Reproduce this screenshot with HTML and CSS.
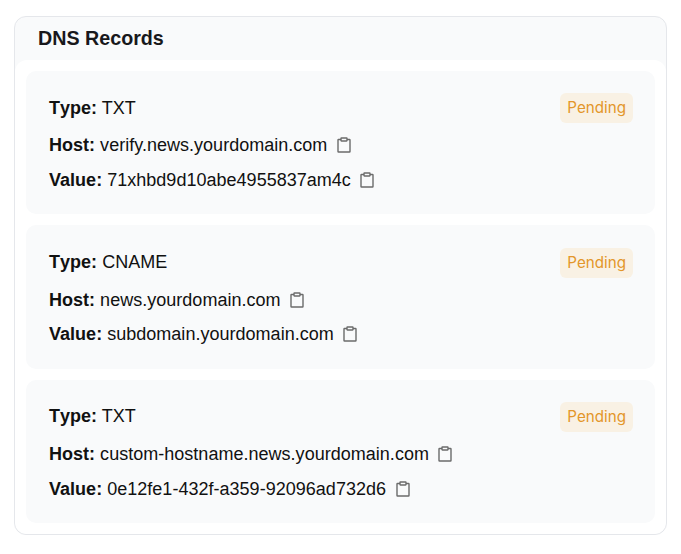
FILE: index.html
```html
<!DOCTYPE html>
<html lang="en">
<head>
  <meta charset="UTF-8" />
  <title>DNS Records</title>
  <link rel="stylesheet" href="styles.css">
</head>
<body>
  <svg class="icon-defs" width="0" height="0">
    <symbol id="clipboard" viewBox="0 0 16 16">
      <path d="M5 2.5H2.5a.5.5 0 0 0-.5.5v11.5a.5.5 0 0 0 .5.5h11a.5.5 0 0 0 .5-.5V3a.5.5 0 0 0-.5-.5H11" fill="none" stroke="currentColor" stroke-width="1.4"/>
      <rect x="5" y="1" width="6" height="3" rx=".4" fill="none" stroke="currentColor" stroke-width="1.4"/>
    </symbol>
  </svg>

  <section class="records-panel">
    <h2 class="panel-title">DNS Records</h2>
    <div class="panel-body">

      <div class="record">
        <span class="badge">Pending</span>
        <p class="row row-type"><strong>Type:</strong> TXT</p>
        <p class="row"><strong>Host:</strong> verify.news.yourdomain.com <svg class="copy"><use href="#clipboard"/></svg></p>
        <p class="row"><strong>Value:</strong> 71xhbd9d10abe4955837am4c <svg class="copy"><use href="#clipboard"/></svg></p>
      </div>

      <div class="record">
        <span class="badge">Pending</span>
        <p class="row row-type"><strong>Type:</strong> CNAME</p>
        <p class="row"><strong>Host:</strong> news.yourdomain.com <svg class="copy"><use href="#clipboard"/></svg></p>
        <p class="row"><strong>Value:</strong> subdomain.yourdomain.com <svg class="copy"><use href="#clipboard"/></svg></p>
      </div>

      <div class="record">
        <span class="badge">Pending</span>
        <p class="row row-type"><strong>Type:</strong> TXT</p>
        <p class="row"><strong>Host:</strong> custom-hostname.news.yourdomain.com <svg class="copy"><use href="#clipboard"/></svg></p>
        <p class="row"><strong>Value:</strong> 0e12fe1-432f-a359-92096ad732d6 <svg class="copy"><use href="#clipboard"/></svg></p>
      </div>

    </div>
  </section>
</body>
</html>
```

FILE: styles.css
```css
body {
  margin: 0;
  padding: 16px 14px 19px;
  background: #ffffff;
  color: #111111;
  font-family: "Liberation Sans", Arial, sans-serif;
}

.icon-defs {
  position: absolute;
}

.records-panel {
  background: #f9fafb;
  border: 1px solid #e5e7eb;
  border-radius: 12px;
  overflow: hidden;
}

.panel-title {
  margin: 0;
  padding: 9px 23px 0;
  height: 34px;
  font-size: 19.7px;
  line-height: 25px;
  font-weight: 700;
  color: #18181b;
}

.panel-body {
  display: flex;
  flex-direction: column;
  gap: 11px;
  padding: 11px;
  background: #ffffff;
  border-radius: 12px;
}

.record {
  position: relative;
  height: 143.25px;
  padding: 24.75px 23px 0;
  box-sizing: border-box;
  background: #f9fafb;
  border-radius: 10px;
}

.row {
  margin: 0 0 10.75px;
  font-size: 18px;
  letter-spacing: .02px;
  line-height: 24px;
  white-space: nowrap;
}

.row-type {
  margin-bottom: 13.5px;
}

.row-type strong {
  font-kerning: none;
}

.copy {
  width: 16px;
  height: 16px;
  margin-left: 3.5px;
  vertical-align: -2px;
  color: #6b6b6b;
}

.badge {
  position: absolute;
  top: 22.25px;
  right: 22px;
  padding: 0 7px;
  line-height: 30px;
  font-family: "Inter", sans-serif;
  font-size: 15.2px;
  color: #e3962a;
  background: #f9f1e4;
  border-radius: 6px;
}
```
